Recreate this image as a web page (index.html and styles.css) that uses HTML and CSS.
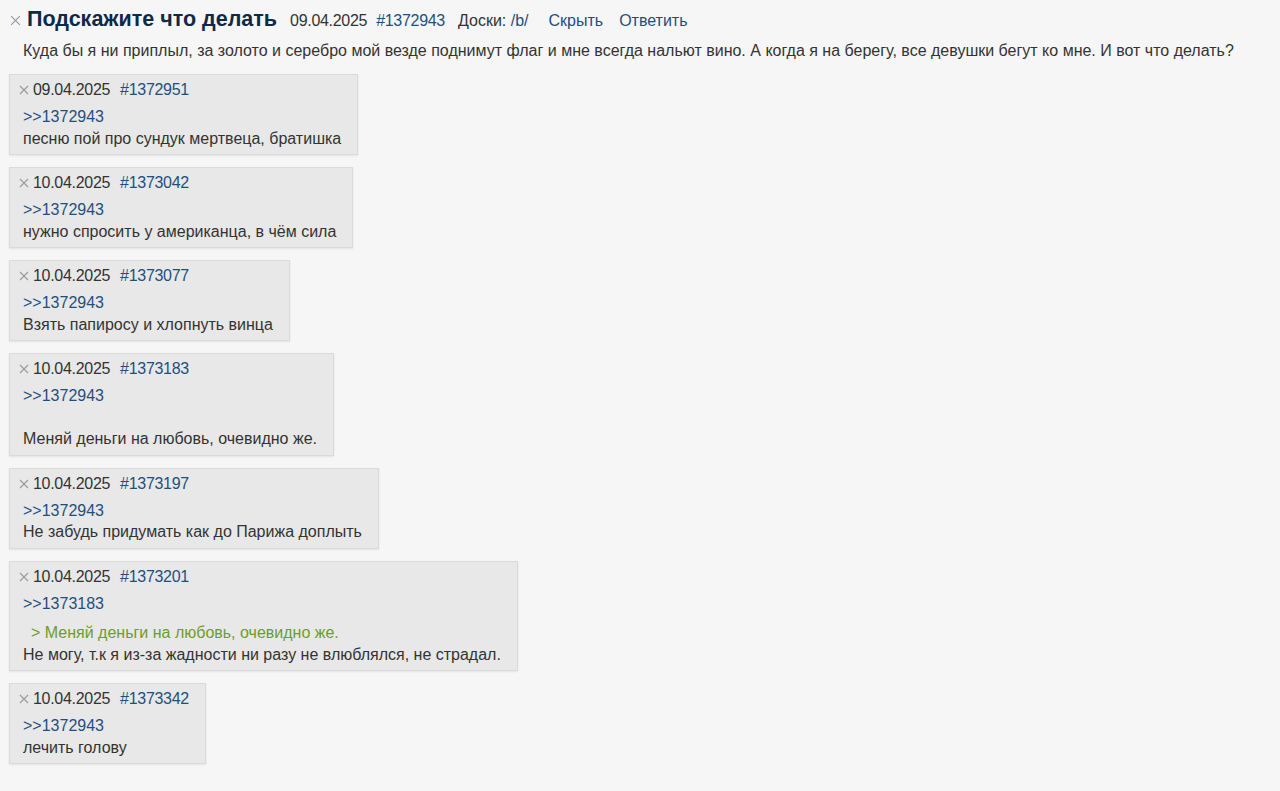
FILE: index.html
```html
<!DOCTYPE html>
<html lang="ru">
<head>
    <meta charset="UTF-8">
    <title>Подскажите что делать</title>
    <link rel="stylesheet" href="styles.css">
</head>
<body>
    <div class="thread">
        <div class="oppost">
            <div class="post-head">
                <svg class="close" viewBox="0 0 10 10"><path d="M1 1L9 9M9 1L1 9"/></svg>
                <span class="title">Подскажите что делать</span>
                <span class="date">09.04.2025</span>
                <a class="num" href="#">#1372943</a>
                <span class="boards">Доски: <a href="#">/b/</a></span>
                <a class="action" href="#">Скрыть</a>
                <a class="action" href="#">Ответить</a>
            </div>
            <div class="op-text">Куда бы я ни приплыл, за золото и серебро мой везде поднимут флаг и мне всегда нальют вино. А когда я на берегу, все девушки бегут ко мне. И вот что делать?</div>
        </div>

        <div class="reply">
            <div class="reply-head"><svg class="close" viewBox="0 0 10 10"><path d="M1 1L9 9M9 1L1 9"/></svg><span class="date">09.04.2025</span><a class="num" href="#">#1372951</a></div>
            <div class="reply-text">
                <a class="ref" href="#">&gt;&gt;1372943</a><br>
                песню пой про сундук мертвеца, братишка
            </div>
        </div>

        <div class="reply">
            <div class="reply-head"><svg class="close" viewBox="0 0 10 10"><path d="M1 1L9 9M9 1L1 9"/></svg><span class="date">10.04.2025</span><a class="num" href="#">#1373042</a></div>
            <div class="reply-text">
                <a class="ref" href="#">&gt;&gt;1372943</a><br>
                нужно спросить у американца, в чём сила
            </div>
        </div>

        <div class="reply">
            <div class="reply-head"><svg class="close" viewBox="0 0 10 10"><path d="M1 1L9 9M9 1L1 9"/></svg><span class="date">10.04.2025</span><a class="num" href="#">#1373077</a></div>
            <div class="reply-text">
                <a class="ref" href="#">&gt;&gt;1372943</a><br>
                Взять папиросу и хлопнуть винца
            </div>
        </div>

        <div class="reply">
            <div class="reply-head"><svg class="close" viewBox="0 0 10 10"><path d="M1 1L9 9M9 1L1 9"/></svg><span class="date">10.04.2025</span><a class="num" href="#">#1373183</a></div>
            <div class="reply-text">
                <a class="ref" href="#">&gt;&gt;1372943</a><br>
                <br>
                Меняй деньги на любовь, очевидно же.
            </div>
        </div>

        <div class="reply">
            <div class="reply-head"><svg class="close" viewBox="0 0 10 10"><path d="M1 1L9 9M9 1L1 9"/></svg><span class="date">10.04.2025</span><a class="num" href="#">#1373197</a></div>
            <div class="reply-text">
                <a class="ref" href="#">&gt;&gt;1372943</a><br>
                Не забудь придумать как до Парижа доплыть
            </div>
        </div>

        <div class="reply">
            <div class="reply-head"><svg class="close" viewBox="0 0 10 10"><path d="M1 1L9 9M9 1L1 9"/></svg><span class="date">10.04.2025</span><a class="num" href="#">#1373201</a></div>
            <div class="reply-text">
                <a class="ref" href="#">&gt;&gt;1373183</a>
                <div class="quote">&gt; Меняй деньги на любовь, очевидно же.</div>
                Не могу, т.к я из-за жадности ни разу не влюблялся, не страдал.
            </div>
        </div>

        <div class="reply">
            <div class="reply-head"><svg class="close" viewBox="0 0 10 10"><path d="M1 1L9 9M9 1L1 9"/></svg><span class="date">10.04.2025</span><a class="num" href="#">#1373342</a></div>
            <div class="reply-text">
                <a class="ref" href="#">&gt;&gt;1372943</a><br>
                лечить голову
            </div>
        </div>
    </div>
</body>
</html>
```

FILE: styles.css
```css
body {
    margin: 0;
    background-color: #f6f6f6;
    color: #333;
    font-family: 'Liberation Sans', Arial, sans-serif;
    font-size: 16px;
}

a {
    color: #1f4f7f;
    text-decoration: none;
}

.thread {
    padding: 7px 9px;
}

.oppost {
    margin-bottom: 10px;
}

.post-head {
    display: flex;
    align-items: baseline;
    line-height: 24px;
}

.close {
    width: 10px;
    height: 10px;
    fill: none;
    stroke: #9a9a9a;
    stroke-width: 1.1;
}

.post-head .close {
    width: 11px;
    height: 11px;
    margin-left: 1px;
    margin-right: 6px;
}

.title {
    color: #0f2a48;
    font-size: 21.5px;
    font-weight: bold;
    margin-right: 13px;
}

.date,
.num {
    letter-spacing: -0.3px;
}

.post-head .date {
    margin-right: 9px;
}

.post-head .num {
    margin-right: 13px;
}

.boards {
    margin-right: 20px;
}

.action {
    margin-right: 16px;
}

.op-text {
    padding-left: 14px;
    margin-top: 5px;
    line-height: 26px;
}

.reply {
    display: table;
    background-color: #e8e8e8;
    border: 1px solid #dadada;
    box-shadow: 0 1px 2px rgba(0, 0, 0, 0.08);
    padding: 5px 16px 5px 8px;
    margin-bottom: 12px;
}

.reply-head {
    line-height: 20px;
    margin-bottom: 6px;
}

.reply-head .close {
    margin-left: 1px;
    margin-right: 4px;
}

.reply-head .num {
    margin-left: 10px;
}

.reply-text {
    padding-left: 5px;
    line-height: 21.5px;
}

.quote {
    color: #6e9d2a;
    padding-left: 8px;
    margin-top: 8px;
}
```
